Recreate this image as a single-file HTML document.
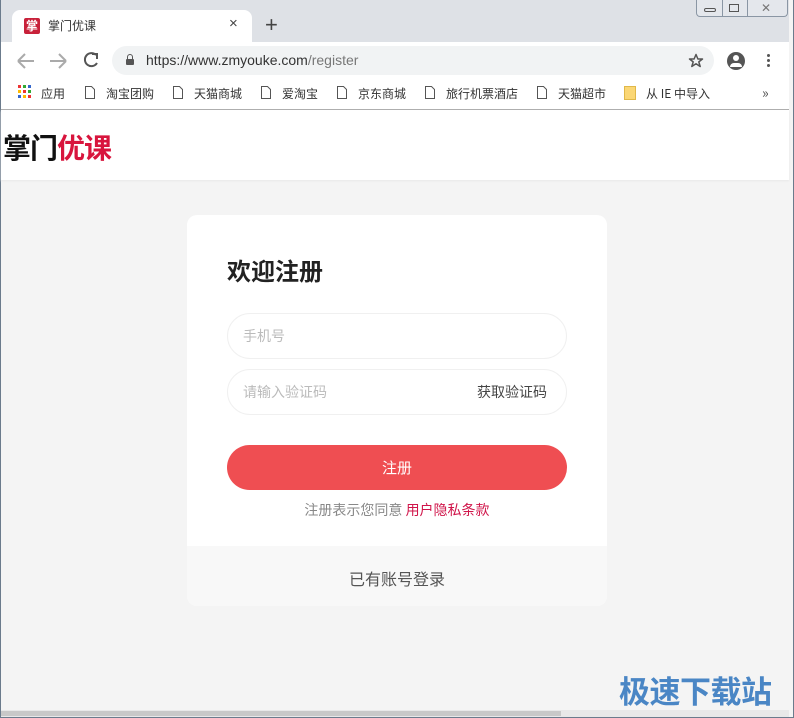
<!DOCTYPE html>
<html><head><meta charset="utf-8"><style>
*{margin:0;padding:0;box-sizing:border-box}
body{width:794px;height:718px;overflow:hidden;background:#f4f4f4;font-family:"Liberation Sans","Noto Sans CJK SC",sans-serif;position:relative}
.abs{position:absolute}
.cn{font-family:"Microsoft YaHei","Noto Sans CJK SC",sans-serif}
</style></head><body>
<div class="abs" style="left:0;top:0;width:794px;height:718px;border:1px solid #6b7b8c;border-top:none"></div>
<div class="abs" style="left:1px;top:0;width:788px;height:42px;background:#dee1e6"></div>
<div class="abs" style="left:696px;top:0;width:92px;height:17px;border:1px solid #8a96a4;border-top:none;border-radius:0 0 4px 4px;background:#e4e7ec"></div>
<div class="abs" style="left:722px;top:0;width:1px;height:17px;background:#8a96a4"></div>
<div class="abs" style="left:747px;top:0;width:1px;height:17px;background:#8a96a4"></div>
<div class="abs" style="left:704px;top:8px;width:12px;height:4px;border:1px solid #555;border-radius:2px"></div>
<div class="abs" style="left:729px;top:4px;width:10px;height:8px;border:1px solid #555"></div>
<div class="abs" style="left:761px;top:1px;font-size:12px;color:#777">✕</div>
<div class="abs" style="left:12px;top:10px;width:240px;height:32px;background:#fff;border-radius:8px 8px 0 0"></div>
<div class="abs cn" style="left:24px;top:18px;width:16px;height:16px;background:#c8213a;border-radius:2px;color:#fff;font-size:12px;line-height:16px;text-align:center;font-weight:bold">掌</div>
<div class="abs cn" style="left:48px;top:17px;font-size:12px;color:#333">掌门优课</div>
<div class="abs" style="left:229px;top:15px;font-size:15px;color:#444">×</div>
<div class="abs" style="left:265px;top:12px;font-size:22px;color:#444;font-weight:300">+</div>
<div class="abs" style="left:1px;top:42px;width:788px;height:68px;background:#fff"></div>
<svg class="abs" style="left:16px;top:51px" width="90" height="20">
<path d="M2 10H18M2 10L9 3M2 10L9 17" stroke="#aaa" stroke-width="2" fill="none"/>
<path d="M34 10H50M50 10L43 3M50 10L43 17" stroke="#aaa" stroke-width="2" fill="none"/>
<path d="M80 4A6.5 6.5 0 1 0 81 12" stroke="#555" stroke-width="2" fill="none"/><path d="M76 3H81V8" stroke="#555" stroke-width="2" fill="none"/>
</svg>
<div class="abs" style="left:112px;top:46px;width:602px;height:29px;background:#f1f3f4;border-radius:15px"></div>
<div class="abs" style="left:126px;top:59px;width:8px;height:6px;background:#555;border-radius:1px"></div>
<div class="abs" style="left:127px;top:54px;width:6px;height:7px;border:1.5px solid #555;border-radius:3px 3px 0 0"></div>
<div class="abs" style="left:146px;top:52px;font-size:14px;color:#333">https://www.zmyouke.com<span style="color:#777">/register</span></div>
<svg class="abs" style="left:688px;top:53px" width="16" height="16"><path d="M8 1.5L9.9 6H14.5L10.8 8.9L12.2 13.5L8 10.8L3.8 13.5L5.2 8.9L1.5 6H6.1Z" fill="none" stroke="#555" stroke-width="1.5" stroke-linejoin="round"/></svg>
<div class="abs" style="left:727px;top:52px;width:18px;height:18px;border-radius:50%;background:#555"></div>
<div class="abs" style="left:733px;top:55px;width:6px;height:6px;border-radius:50%;background:#fff"></div>
<div class="abs" style="left:730px;top:63px;width:12px;height:4px;border-radius:6px 6px 0 0;background:#fff"></div>
<div class="abs" style="left:767px;top:54px;width:3px;height:3px;border-radius:50%;background:#555;box-shadow:0 5px 0 #555,0 10px 0 #555"></div>
<svg class="abs" style="left:18px;top:85px" width="14" height="14">
<rect x="0" y="0" width="3" height="3" fill="#e33"/><rect x="5" y="0" width="3" height="3" fill="#3a3"/><rect x="10" y="0" width="3" height="3" fill="#36c"/>
<rect x="0" y="5" width="3" height="3" fill="#fb0"/><rect x="5" y="5" width="3" height="3" fill="#e33"/><rect x="10" y="5" width="3" height="3" fill="#3a3"/>
<rect x="0" y="10" width="3" height="3" fill="#36c"/><rect x="5" y="10" width="3" height="3" fill="#fb0"/><rect x="10" y="10" width="3" height="3" fill="#e33"/></svg>
<div class="abs cn" style="left:0;top:85px;width:794px;font-size:12px;color:#333;white-space:nowrap">
<span class="abs" style="left:41px">应用</span>
<span class="abs" style="left:106px">淘宝团购</span>
<span class="abs" style="left:194px">天猫商城</span>
<span class="abs" style="left:282px">爱淘宝</span>
<span class="abs" style="left:358px">京东商城</span>
<span class="abs" style="left:446px">旅行机票酒店</span>
<span class="abs" style="left:558px">天猫超市</span>
<span class="abs" style="left:646px">从 IE 中导入</span>
<span class="abs" style="left:762px;color:#555;font-size:14px;top:-2px">»</span>
</div>
<svg class="abs" style="left:84px;top:85px" width="480" height="16">
<g fill="none" stroke="#555" stroke-width="1"><path d="M1.5 1.5H7.5L10.5 4.5V13.5H1.5Z"/><path d="M89.5 1.5H95.5L98.5 4.5V13.5H89.5Z"/><path d="M177.5 1.5H183.5L186.5 4.5V13.5H177.5Z"/><path d="M253.5 1.5H259.5L262.5 4.5V13.5H253.5Z"/><path d="M341.5 1.5H347.5L350.5 4.5V13.5H341.5Z"/><path d="M453.5 1.5H459.5L462.5 4.5V13.5H453.5Z"/></g></svg>
<div class="abs" style="left:624px;top:86px;width:12px;height:14px;background:#fbd775;border:1px solid #e0b84a"></div>
<div class="abs" style="left:1px;top:109px;width:788px;height:1px;background:#aaa"></div>
<div class="abs" style="left:1px;top:110px;width:788px;height:70px;background:#fff;box-shadow:0 1px 2px #e8e8e8"></div>
<div class="abs cn" style="left:3px;top:127px;font-size:28px;font-weight:bold;letter-spacing:-1px;color:#111">掌门<span style="color:#d8153d">优课</span></div>
<div class="abs" style="left:187px;top:215px;width:420px;height:391px;background:#fff;border-radius:10px;overflow:hidden">
<div class="abs" style="left:0;top:331px;width:420px;height:60px;background:#f8f8f8"></div>
<div class="abs cn" style="left:40px;top:37px;font-size:24px;font-weight:bold;color:#222">欢迎注册</div>
<div class="abs" style="left:40px;top:98px;width:340px;height:46px;border:1px solid #f0f0f0;border-radius:23px"></div>
<div class="abs cn" style="left:56px;top:111px;font-size:14px;color:#bbb">手机号</div>
<div class="abs" style="left:40px;top:154px;width:340px;height:46px;border:1px solid #f0f0f0;border-radius:23px"></div>
<div class="abs cn" style="left:56px;top:167px;font-size:14px;color:#bbb">请输入验证码</div>
<div class="abs cn" style="left:290px;top:167px;font-size:14px;color:#444">获取验证码</div>
<div class="abs cn" style="left:40px;top:230px;width:340px;height:45px;background:#ef4e52;border-radius:23px;color:#fff;font-size:15px;line-height:45px;text-align:center">注册</div>
<div class="abs cn" style="left:0;top:285px;width:420px;text-align:center;font-size:14px;color:#888">注册表示您同意 <span style="color:#d0154a">用户隐私条款</span></div>
<div class="abs cn" style="left:0;top:351px;width:420px;text-align:center;font-size:16px;color:#555">已有账号登录</div>
</div>
<div class="abs cn" style="left:619px;top:667px;font-size:31px;font-weight:bold;color:#4a86c5;letter-spacing:-0.5px">极速下载站</div>
<div class="abs" style="left:1px;top:710px;width:788px;height:7px;background:#e8e8e8"></div>
<div class="abs" style="left:1px;top:711px;width:560px;height:5px;background:#c8c8c8"></div>
</body></html>
